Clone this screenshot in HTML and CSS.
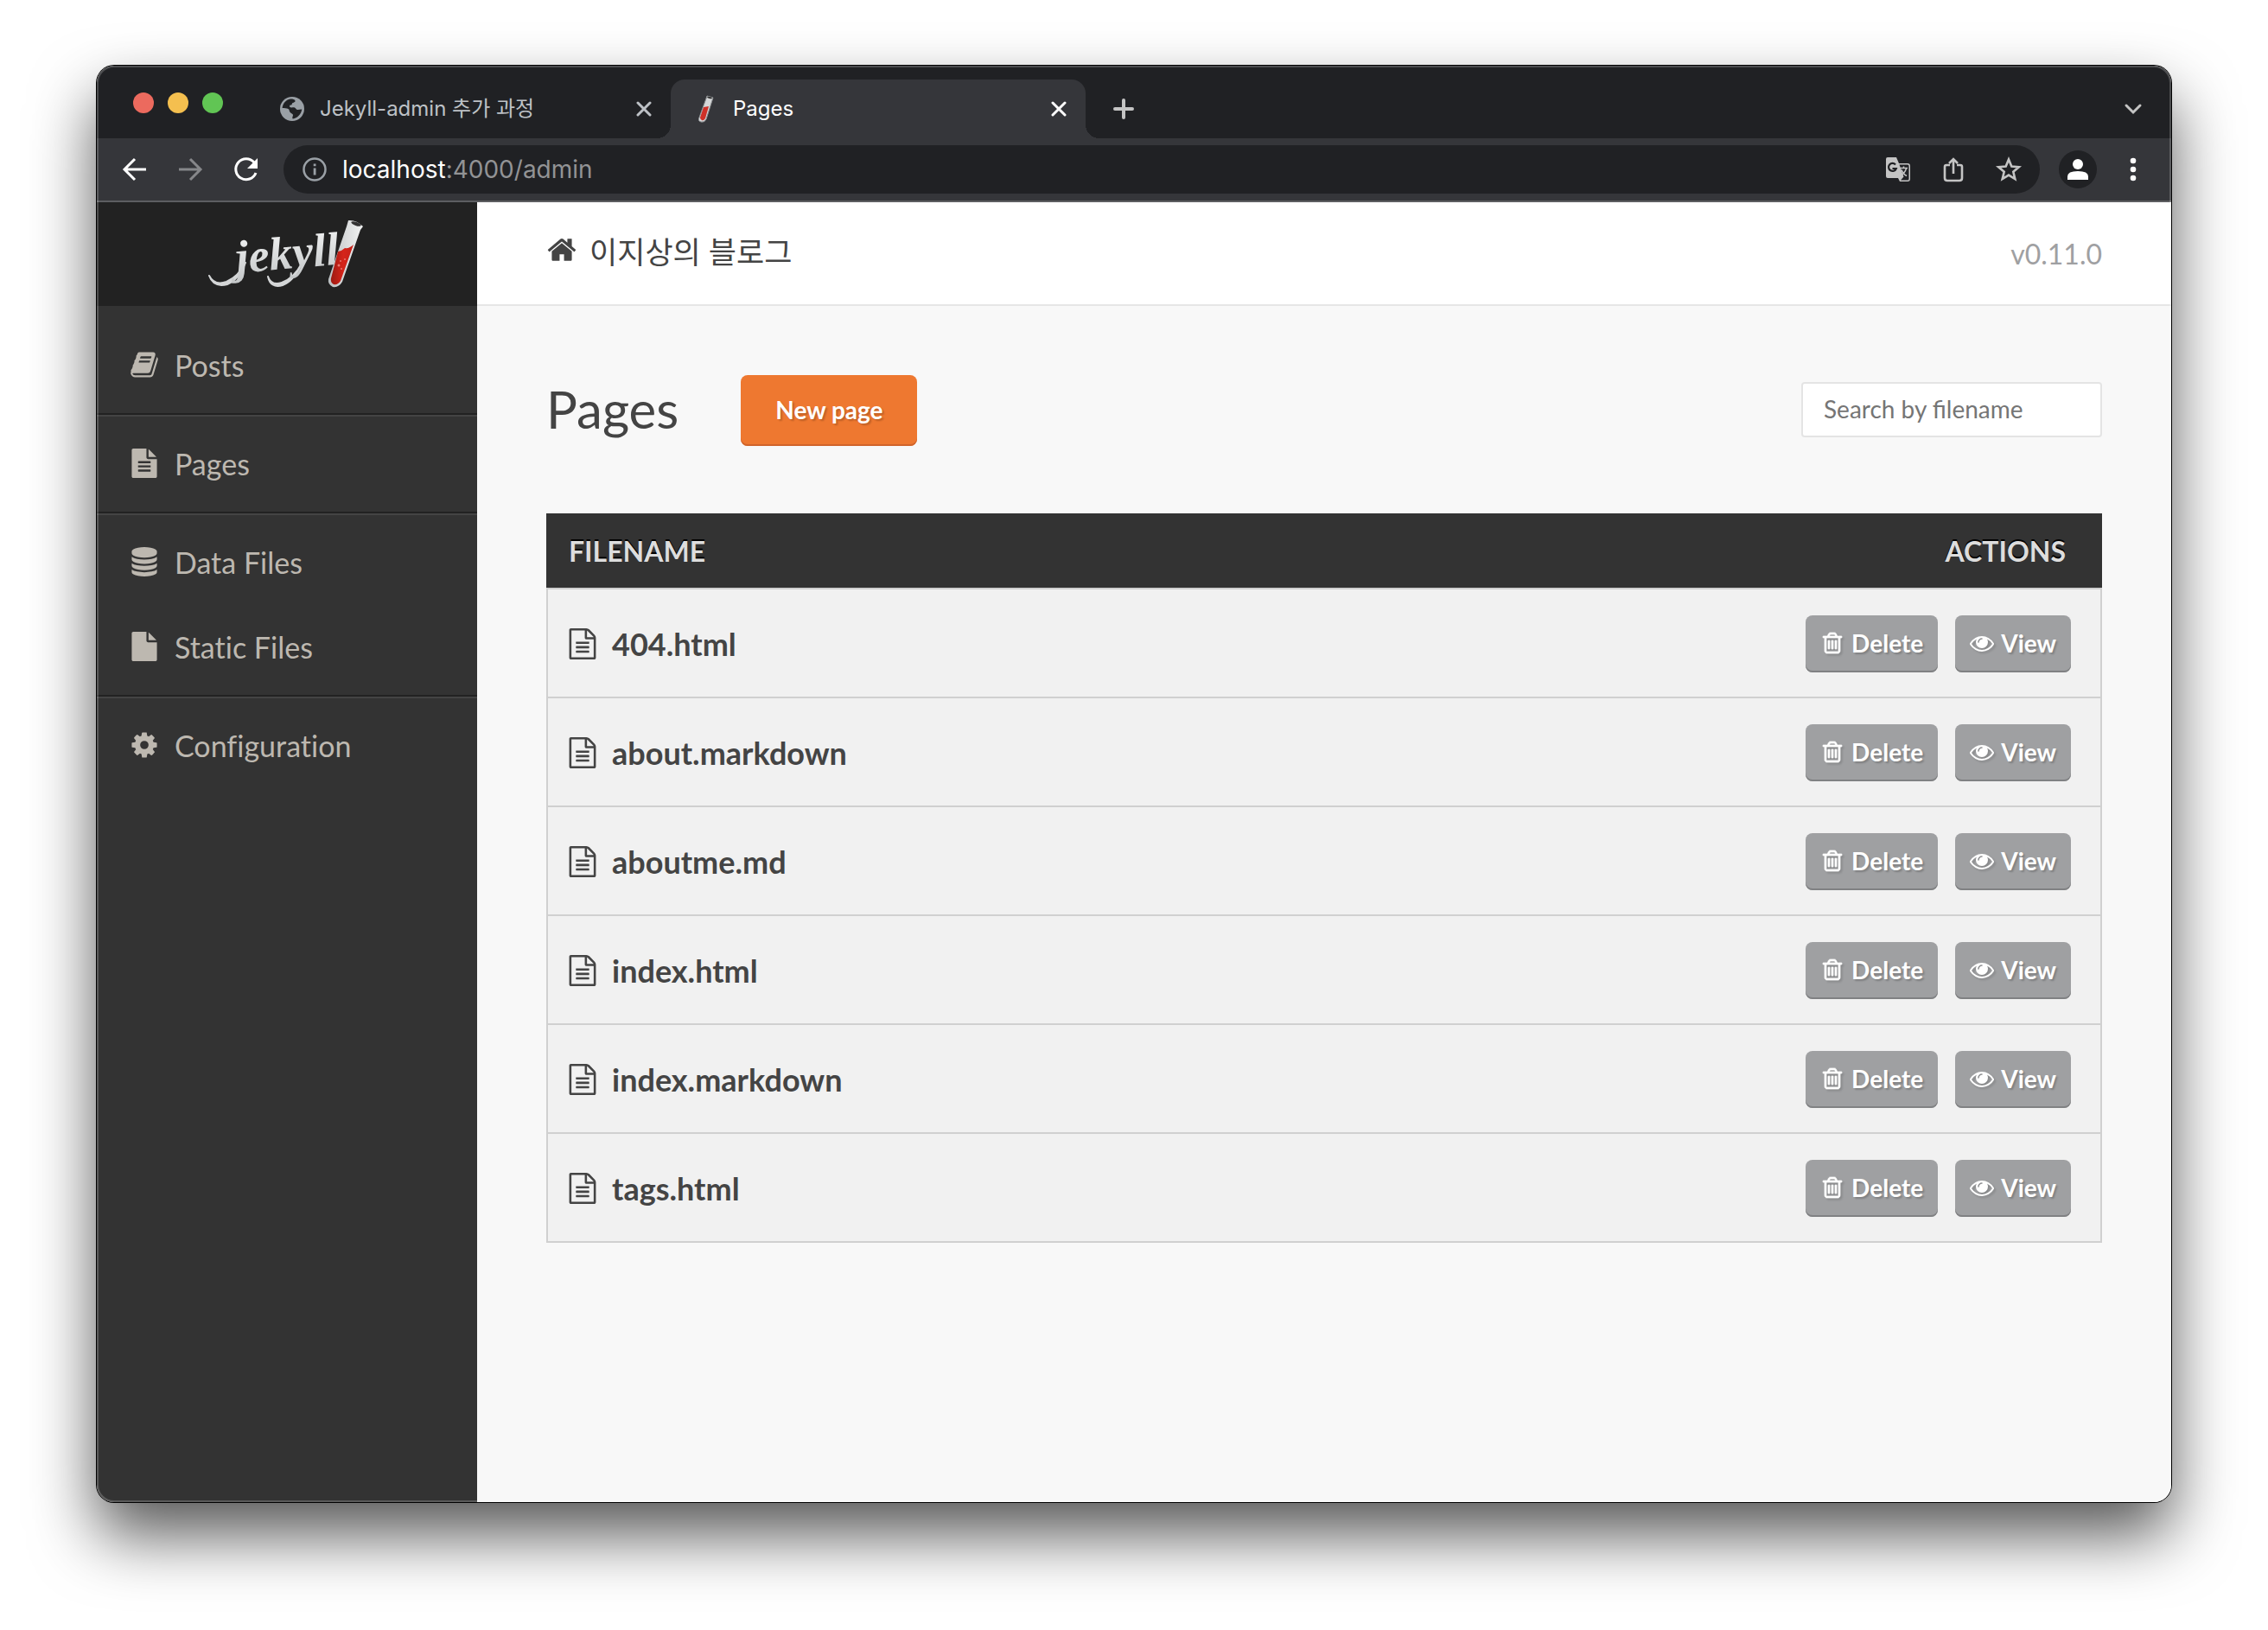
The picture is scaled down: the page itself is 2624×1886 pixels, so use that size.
FILE: index.html
```html
<!DOCTYPE html>
<html lang="ko">
<head>
<meta charset="utf-8">
<title>Pages</title>
<link rel="stylesheet" href="styles.css">
</head>
<body>
<svg class="sprite" aria-hidden="true">
  <defs>
    <linearGradient id="silver" x1="0" y1="0" x2="0" y2="1">
      <stop offset="0" stop-color="#f4f5f5"/><stop offset="1" stop-color="#c3c6c7"/>
    </linearGradient>
    <linearGradient id="glass" x1="0" y1="0" x2="1" y2="0">
      <stop offset="0" stop-color="#b9bdbf"/><stop offset=".5" stop-color="#d9dbdc"/><stop offset="1" stop-color="#f1f2f2"/>
    </linearGradient>
    <linearGradient id="potion" x1="0" y1="0" x2="1" y2="0">
      <stop offset="0" stop-color="#9c1a12"/><stop offset=".55" stop-color="#d6241a"/><stop offset="1" stop-color="#c22018"/>
    </linearGradient>
  </defs>
  <symbol id="i-book" viewBox="0 0 1792 1792"><path d="M1703 478q40 57 18 129l-275 906q-19 64-76.500 107.500t-122.500 43.500h-923q-77 0-148.500-53.500t-99.500-131.500q-24-67-2-127 0-4 3-27t4-37q1-8-3-21.500t-3-19.500q2-11 8-21t16.500-23.500 16.500-23.500q23-38 45-91.500t30-91.500q3-10 .5-30t-.5-28q3-11 17-28t17-23q21-36 42-92t25-90q1-9-2.500-32t.5-28q4-13 22-30.500t22-22.500q19-26 42.500-84.500t27.500-96.500q1-8-3-25.500t-2-26.500q2-8 9-18t18-23 17-21q8-12 16.500-30.500t15-35 16-36 19.500-32 26.500-23.500 36-11.500 47.500 5.500l-1 3q38-9 51-9h761q74 0 114 56t18 130l-274 906q-36 119-71.500 153.500t-128.500 34.500h-869q-27 0-38 15-11 16-1 43 24 70 144 70h923q29 0 56-15.500t35-41.500l300-987q7-22 5-57 38 15 59 43zm-1064 2q-4 13 2 22.500t20 9.500h608q13 0 25.500-9.500t16.500-22.500l21-64q4-13-2-22.500t-20-9.500h-608q-13 0-25.500 9.500t-16.500 22.500zm-83 256q-4 13 2 22.500t20 9.500h608q13 0 25.500-9.500t16.500-22.500l21-64q4-13-2-22.500t-20-9.500h-608q-13 0-25.500 9.500t-16.500 22.500z"/></symbol>
  <symbol id="i-file-text" viewBox="0 0 1792 1792"><path d="M1596 476q14 14 28 36h-472v-472q22 14 36 28zm-476 164h544v1056q0 40-28 68t-68 28h-1344q-40 0-68-28t-28-68v-1600q0-40 28-68t68-28h800v544q0 40 28 68t68 28zm160 736v-64q0-14-9-23t-23-9h-704q-14 0-23 9t-9 23v64q0 14 9 23t23 9h704q14 0 23-9t9-23zm0-256v-64q0-14-9-23t-23-9h-704q-14 0-23 9t-9 23v64q0 14 9 23t23 9h704q14 0 23-9t9-23zm0-256v-64q0-14-9-23t-23-9h-704q-14 0-23 9t-9 23v64q0 14 9 23t23 9h704q14 0 23-9t9-23z"/></symbol>
  <symbol id="i-database" viewBox="0 0 1792 1792"><path d="M896 768q237 0 443-43t325-127v170q0 69-103 128t-280 93.500-385 34.500-385-34.500-280-93.500-103-128v-170q119 84 325 127t443 43zm0 768q237 0 443-43t325-127v170q0 69-103 128t-280 93.500-385 34.500-385-34.500-280-93.500-103-128v-170q119 84 325 127t443 43zm0-384q237 0 443-43t325-127v170q0 69-103 128t-280 93.500-385 34.500-385-34.500-280-93.500-103-128v-170q119 84 325 127t443 43zm0-1152q208 0 385 34.500t280 93.500 103 128v128q0 69-103 128t-280 93.500-385 34.500-385-34.500-280-93.500-103-128v-128q0-69 103-128t280-93.500 385-34.500z"/></symbol>
  <symbol id="i-file" viewBox="0 0 1792 1792"><path d="M1152 512v-472q22 14 36 28l408 408q14 14 28 36h-472zm-128 32q0 40 28 68t68 28h544v1056q0 40-28 68t-68 28h-1344q-40 0-68-28t-28-68v-1600q0-40 28-68t68-28h800v544z"/></symbol>
  <symbol id="i-cog" viewBox="0 0 1792 1792"><path d="M1152 896q0-106-75-181t-181-75-181 75-75 181 75 181 181 75 181-75 75-181zm512-109v222q0 12-8 23t-20 13l-185 28q-19 54-39 91 35 50 107 138 10 12 10 25t-9 23q-27 37-99 108t-94 71q-12 0-26-9l-138-108q-44 23-91 38-16 136-29 186-7 28-36 28h-222q-14 0-24.500-8.500t-11.500-21.500l-28-184q-49-16-90-37l-141 107q-10 9-25 9-14 0-25-11-126-114-165-168-7-10-7-23 0-12 8-23 15-21 51-66.500t54-70.500q-27-50-41-99l-183-27q-13-2-21-12.500t-8-23.500v-222q0-12 8-23t19-13l186-28q14-46 39-92-40-57-107-138-10-12-10-24 0-10 9-23 26-36 98.500-107.500t94.500-71.500q13 0 26 10l138 107q44-23 91-38 16-136 29-186 7-28 36-28h222q14 0 24.500 8.500t11.500 21.500l28 184q49 16 90 37l142-107q9-9 24-9 13 0 25 10 129 119 165 170 7 8 7 22 0 12-8 23-15 21-51 66.500t-54 70.500q26 50 41 98l183 28q13 2 21 12.500t8 23.500z"/></symbol>
  <symbol id="i-home" viewBox="0 0 1792 1792"><path d="M1472 992v480q0 26-19 45t-45 19h-384v-384h-256v384h-384q-26 0-45-19t-19-45v-480q0-1 .5-3t.5-3l575-474 575 474q1 2 1 6zm223-69l-62 74q-8 9-21 11h-3q-13 0-21-7l-692-577-692 577q-12 8-24 7-13-2-21-11l-62-74q-8-10-7-23.500t11-21.500l719-599q32-26 76-26t76 26l244 204v-195q0-14 9-23t23-9h192q14 0 23 9t9 23v408l219 182q10 8 11 21.500t-7 23.500z"/></symbol>
  <symbol id="i-doc" viewBox="0 0 1792 1792"><path d="M1596 380q28 28 48 76t20 88v1152q0 40-28 68t-68 28h-1344q-40 0-68-28t-28-68v-1600q0-40 28-68t68-28h896q40 0 88 20t76 48zm-444-244v376h376q-10-29-22-41l-313-313q-12-12-41-22zm384 1528v-1024h-416q-40 0-68-28t-28-68v-416h-768v1536h1280zm-1024-864q0-14 9-23t23-9h704q14 0 23 9t9 23v64q0 14-9 23t-23 9h-704q-14 0-23-9t-9-23v-64zm736 224q14 0 23 9t9 23v64q0 14-9 23t-23 9h-704q-14 0-23-9t-9-23v-64q0-14 9-23t23-9h704zm0 256q14 0 23 9t9 23v64q0 14-9 23t-23 9h-704q-14 0-23-9t-9-23v-64q0-14 9-23t23-9h704z"/></symbol>
  <symbol id="i-trash" viewBox="0 0 1792 1792"><path stroke="currentColor" stroke-width="48" d="M704 736v576q0 14-9 23t-23 9h-64q-14 0-23-9t-9-23v-576q0-14 9-23t23-9h64q14 0 23 9t9 23zm256 0v576q0 14-9 23t-23 9h-64q-14 0-23-9t-9-23v-576q0-14 9-23t23-9h64q14 0 23 9t9 23zm256 0v576q0 14-9 23t-23 9h-64q-14 0-23-9t-9-23v-576q0-14 9-23t23-9h64q14 0 23 9t9 23zm128 724v-948h-896v948q0 22 7 40.500t14.500 27 10.500 8.500h832q3 0 10.500-8.500t14.500-27 7-40.500zm-672-1076h448l-48-117q-7-9-17-11h-317q-10 2-17 11zm928 32v64q0 14-9 23t-23 9h-96v948q0 83-47 143.500t-113 60.500h-832q-66 0-113-58.500t-47-141.500v-952h-96q-14 0-23-9t-9-23v-64q0-14 9-23t23-9h309l70-167q15-37 54-63t79-26h320q40 0 79 26t54 63l70 167h309q14 0 23 9t9 23z"/></symbol>
  <symbol id="i-eye" viewBox="0 0 1792 1792"><path d="M1664 960q-152-236-381-353 61 104 61 225 0 185-131.500 316.500t-316.500 131.500-316.500-131.500-131.500-316.500q0-121 61-225-229 117-381 353 133 205 333.500 326.500t434.500 121.500 434.500-121.500 333.500-326.500zm-720-384q0-20-14-34t-34-14q-125 0-214.500 89.500t-89.500 214.500q0 20 14 34t34 14 34-14 14-34q0-86 61-147t147-61q20 0 34-14t14-34zm848 384q0 34-20 69-140 230-376.500 368.500t-499.500 138.500-499.500-139-376.500-368q-20-35-20-69t20-69q140-229 376.500-368t499.500-139 499.500 139 376.500 368q20 35 20 69z"/></symbol>
  <symbol id="i-close" viewBox="0 0 18 18"><path d="M2 2l14 14M16 2L2 16" fill="none" stroke="currentColor" stroke-width="3" stroke-linecap="round"/></symbol>
  <symbol id="i-tube" viewBox="0 0 18 32">
    <path d="M10 1l7 2-8 25q-2 4-6 3T1 26L9 4z" fill="#d5d7d8" stroke="#8d9092"/>
    <path d="M6 14l6-1-4 14q-2 3-4 2t-2-3z" fill="#cf3128"/>
    <ellipse cx="13" cy="3" rx="3" ry="1" fill="#333" transform="rotate(16 13 3)"/>
  </symbol>
</svg>

<div class="window">
  <div class="tabstrip">
    <div class="lights"><span class="light red"></span><span class="light yellow"></span><span class="light green"></span></div>
    <div class="tabs">
      <div class="tab">
        <svg class="globe" viewBox="0 0 28 28"><circle cx="14" cy="14" r="14" fill="#9aa0a6"/><path d="M12 2.500c3 0 5 .4 5.500 2s-1.500 1.500-2 3-1 2.300-2.700 2.300-2.300 1-1.500 2 3.300.4 5 .5 2 2.400 3.700 2.600 3.300-.6 5.300-.4C24.500 20 20 25 14.800 25.400c-1.200-1.400 0-2.600.2-4.200s-2.400-2-3.500-3.400-.3-3-2-3.900S5 13.300 2.600 13C3 8 6.500 3.500 12 2.500z" fill="#202124"/><path d="M11 9.500q3 .8 2.800-1.200t3-1.500q2 1 3.800 0l2 3.700-3 1.500-3.500-1.500-3 1.500z" fill="#9aa0a6"/></svg>
        <span class="tab-title">Jekyll-admin 추가 과정</span>
        <button class="tab-close" aria-label="Close tab"><svg viewBox="0 0 18 18"><use href="#i-close"/></svg></button>
      </div>
      <div class="tab active">
        <svg class="tube" viewBox="0 0 18 32"><use href="#i-tube"/></svg>
        <span class="tab-title">Pages</span>
        <button class="tab-close" aria-label="Close tab"><svg viewBox="0 0 18 18"><use href="#i-close"/></svg></button>
      </div>
    </div>
    <button class="plain new-tab" aria-label="New tab"><svg viewBox="0 0 24 24"><path d="M12 2v20M2 12h20" fill="none" stroke="currentColor" stroke-width="4" stroke-linecap="round"/></svg></button>
    <button class="plain tab-search" aria-label="Search tabs"><svg viewBox="0 0 24 24"><path d="M4 8l8 8 8-8" fill="none" stroke="currentColor" stroke-width="3" stroke-linecap="round"/></svg></button>
  </div>

  <div class="toolbar">
    <div class="nav-btns">
      <button class="plain nav-btn" aria-label="Back"><svg viewBox="0 0 32 32"><path d="M29 16H5M16 4L4 16l12 12" fill="none" stroke="currentColor" stroke-width="3"/></svg></button>
      <button class="plain nav-btn dim" aria-label="Forward"><svg viewBox="0 0 32 32"><path d="M3 16h24M16 4l12 12-12 12" fill="none" stroke="currentColor" stroke-width="3"/></svg></button>
      <button class="plain nav-btn" aria-label="Reload"><svg viewBox="0 0 32 32"><path d="M28 20A12 12 0 1 1 26 8" fill="none" stroke="currentColor" stroke-width="3"/><path d="M30 3v12H18z" fill="currentColor"/></svg></button>
    </div>
    <div class="omnibox">
      <svg class="info" viewBox="0 0 28 28"><circle cx="14" cy="14" r="12.500" fill="none" stroke="currentColor" stroke-width="2.500"/><path d="M12.700 12.500h2.800v8h-2.800zM12.700 7.500h2.800v2.800h-2.800z" fill="currentColor"/></svg>
      <p class="url"><span>localhost</span>:4000/admin</p>
      <div class="omnibox-actions">
        <button class="plain" aria-label="Translate"><svg viewBox="0 0 32 32"><path d="M4 2h10l3 7h10a3 3 0 0 1 3 3v15a3 3 0 0 1-3 3H18l-2-4H4a2 2 0 0 1-2-2V4a2 2 0 0 1 2-2z" fill="#c4c4c4"/><path d="M17.500 10.500l5 14-3.500 4h8q1.500 0 1.500-1.500V12q0-1.500-1.500-1.500z" fill="#202124"/><path d="M18 14.500h9M22.500 12.500v2M25.500 15q-2 6-6.500 8M20 16.500q2 5 6 7" fill="none" stroke="#c4c4c4" stroke-width="1.500"/><path d="M13 10.500a4.500 4.500 0 1 0 .8 4.500H9.500" fill="none" stroke="#202124" stroke-width="2.200"/></svg></button>
        <button class="plain" aria-label="Share"><svg viewBox="0 0 32 32"><path d="M12 11H8q-2 0-2 2v13q0 3 3 3h14q3 0 3-3V13q0-2-2-2h-4M16 21V4M11 9l5-5 5 5" fill="none" stroke="currentColor" stroke-width="2.600"/></svg></button>
        <button class="plain" aria-label="Bookmark"><svg viewBox="0 0 32 32"><path d="M16 4.500l3.300 8 8.500.7-6.500 5.500 2 8.400-7.300-4.500-7.300 4.500 2-8.400-6.500-5.500 8.500-.7z" fill="none" stroke="currentColor" stroke-width="2.600"/></svg></button>
      </div>
    </div>
    <button class="plain avatar" aria-label="Profile"><svg viewBox="0 0 24 24"><circle cx="12" cy="6" r="6" fill="#fff"/><path d="M0 24v-4q0-6 12-6t12 6v4z" fill="#fff"/></svg></button>
    <button class="plain menu" aria-label="Menu"><svg viewBox="0 0 32 32"><circle cx="16" cy="6" r="3.300" fill="currentColor"/><circle cx="16" cy="16" r="3.300" fill="currentColor"/><circle cx="16" cy="26" r="3.300" fill="currentColor"/></svg></button>
  </div>

  <div class="app">
    <aside class="sidebar">
      <a class="logo" href="#" aria-label="Jekyll">
        <svg viewBox="0 0 180 80">
          <path d="M0 65Q6 77 20 72 34 66 42 50 34 70 21 75 5 79 0 65zM68 66q4 11 16 7 14-5 23-22-9 20-22 25-14 4-17-10z" fill="#d4d6d7" stroke="#d4d6d7" stroke-width="2" stroke-linejoin="round"/>
          <text class="wordmark" x="32" y="62" transform="rotate(-5 32 62)" fill="url(#silver)">jekyll</text>
          <path d="M161 1q9-1 17 7l-3 4-21 60q-4 7-11 6-6-3-5-9l21-61z" fill="url(#glass)"/>
          <path d="M149 37q5-1 8-4 5 1 10-4l-15 42q-3 5-8 4-4-2-3-7z" fill="url(#potion)"/>
          <ellipse cx="170" cy="5" rx="6" ry="2" fill="#333" transform="rotate(20 170 5)"/>
          <g fill="#e8776f"><circle cx="152" cy="48" r="1"/><circle cx="157" cy="46" r="1"/><circle cx="150" cy="53" r="1.500"/><circle cx="153" cy="57" r="1"/></g>
        </svg>
      </a>
      <nav class="nav">
        <ul><li><a href="#"><svg viewBox="0 0 34 34"><use href="#i-book"/></svg>Posts</a></li></ul>
        <ul><li><a href="#"><svg viewBox="0 0 34 34"><use href="#i-file-text"/></svg>Pages</a></li></ul>
        <ul>
          <li><a href="#"><svg viewBox="0 0 34 34"><use href="#i-database"/></svg>Data Files</a></li>
          <li><a href="#"><svg viewBox="0 0 34 34"><use href="#i-file"/></svg>Static Files</a></li>
        </ul>
        <ul><li><a href="#"><svg viewBox="0 0 34 34"><use href="#i-cog"/></svg>Configuration</a></li></ul>
      </nav>
    </aside>

    <main class="main">
      <header class="site-header">
        <a class="site-title" href="#"><svg viewBox="0 0 36 36"><use href="#i-home"/></svg>이지상의 블로그</a>
        <span class="version">v0.11.0</span>
      </header>
      <section class="content">
        <div class="page-head">
          <h1>Pages</h1>
          <a class="btn btn-create" href="#">New page</a>
          <input class="search" type="text" placeholder="Search by filename" aria-label="Search by filename">
        </div>
        <table class="files">
          <thead><tr><th>Filename</th><th class="actions-head">Actions</th></tr></thead>
          <tbody>
            <tr><td><a class="file" href="#"><svg viewBox="0 0 36 36"><use href="#i-doc"/></svg>404.html</a></td><td><div class="actions"><button class="btn btn-small"><svg viewBox="0 0 28 28"><use href="#i-trash"/></svg>Delete</button><a class="btn btn-small" href="#"><svg viewBox="0 0 28 28"><use href="#i-eye"/></svg>View</a></div></td></tr>
            <tr><td><a class="file" href="#"><svg viewBox="0 0 36 36"><use href="#i-doc"/></svg>about.markdown</a></td><td><div class="actions"><button class="btn btn-small"><svg viewBox="0 0 28 28"><use href="#i-trash"/></svg>Delete</button><a class="btn btn-small" href="#"><svg viewBox="0 0 28 28"><use href="#i-eye"/></svg>View</a></div></td></tr>
            <tr><td><a class="file" href="#"><svg viewBox="0 0 36 36"><use href="#i-doc"/></svg>aboutme.md</a></td><td><div class="actions"><button class="btn btn-small"><svg viewBox="0 0 28 28"><use href="#i-trash"/></svg>Delete</button><a class="btn btn-small" href="#"><svg viewBox="0 0 28 28"><use href="#i-eye"/></svg>View</a></div></td></tr>
            <tr><td><a class="file" href="#"><svg viewBox="0 0 36 36"><use href="#i-doc"/></svg>index.html</a></td><td><div class="actions"><button class="btn btn-small"><svg viewBox="0 0 28 28"><use href="#i-trash"/></svg>Delete</button><a class="btn btn-small" href="#"><svg viewBox="0 0 28 28"><use href="#i-eye"/></svg>View</a></div></td></tr>
            <tr><td><a class="file" href="#"><svg viewBox="0 0 36 36"><use href="#i-doc"/></svg>index.markdown</a></td><td><div class="actions"><button class="btn btn-small"><svg viewBox="0 0 28 28"><use href="#i-trash"/></svg>Delete</button><a class="btn btn-small" href="#"><svg viewBox="0 0 28 28"><use href="#i-eye"/></svg>View</a></div></td></tr>
            <tr><td><a class="file" href="#"><svg viewBox="0 0 36 36"><use href="#i-doc"/></svg>tags.html</a></td><td><div class="actions"><button class="btn btn-small"><svg viewBox="0 0 28 28"><use href="#i-trash"/></svg>Delete</button><a class="btn btn-small" href="#"><svg viewBox="0 0 28 28"><use href="#i-eye"/></svg>View</a></div></td></tr>
          </tbody>
        </table>
      </section>
    </main>
  </div>
</div>
</body>
</html>
```
FILE: styles.css
```css
*, *::before, *::after { box-sizing: border-box; }

body {
  margin: 0;
  min-height: 100vh;
  padding: 76px 112px 148px;
  display: flex;
  flex-direction: column;
  background: #fff;
  color: #444;
  font-family: Lato, "Noto Sans CJK KR", sans-serif;
  font-variant-ligatures: no-common-ligatures;
}

a { color: inherit; text-decoration: none; }
ul { margin: 0; padding: 0; list-style: none; }
svg { display: block; flex: none; fill: currentColor; }
button { font-family: inherit; cursor: pointer; }
.sprite { position: absolute; width: 0; height: 0; }

.plain {
  display: grid;
  place-items: center;
  flex: none;
  padding: 0;
  border: 0;
  background: none;
  color: #c4c4c4;
}

/* Browser window */
.window {
  position: relative;
  flex: 1;
  display: flex;
  flex-direction: column;
  border-radius: 20px;
  box-shadow: 0 0 0 1px #000, 0 38px 74px rgba(0, 0, 0, .66);
}
.window::after {
  content: "";
  position: absolute;
  inset: 0;
  border-radius: 20px;
  box-shadow: inset 0 0 0 2px rgba(255, 255, 255, .2);
  pointer-events: none;
}

.tabstrip {
  display: flex;
  align-items: flex-end;
  height: 84px;
  padding: 0 32px 0 42px;
  border-radius: 20px 20px 0 0;
  background: #202124;
  font-family: Inter, "Noto Sans CJK KR", sans-serif;
  font-size: 24px;
  line-height: 32px;
}
.lights {
  display: flex;
  align-items: center;
  gap: 16px;
  width: 142px;
  height: 82px;
}
.light { width: 24px; height: 24px; border-radius: 50%; }
.red { background: #ec6a5e; }
.yellow { background: #f4bf4f; }
.green { background: #61c554; }

.tabs { display: flex; }
.tab {
  position: relative;
  display: flex;
  align-items: center;
  width: 480px;
  height: 68px;
  padding: 0 22px 0 28px;
  color: #bdc1c6;
}
.tab.active {
  border-radius: 16px 16px 0 0;
  background: #35363a;
  color: #fff;
}
.tab.active::before,
.tab.active::after {
  content: "";
  position: absolute;
  bottom: 0;
  width: 16px;
  height: 16px;
}
.tab.active::before { right: 100%; background: radial-gradient(circle at 0 0, #202124 16px, #35363a 16px); }
.tab.active::after { left: 100%; background: radial-gradient(circle at 100% 0, #202124 16px, #35363a 16px); }
.globe { width: 28px; height: 28px; }
.tube { width: 18px; height: 32px; margin: 0 6px 0 4px; }
.tab-title { flex: 1; padding: 0 16px 0 18px; }
.active .tab-title { padding-left: 16px; }
.tab-close {
  width: 18px;
  height: 18px;
  padding: 0;
  border: 0;
  background: none;
  color: inherit;
}
.tab-close svg { width: 18px; height: 18px; }
.new-tab { height: 68px; margin-left: 32px; }
.new-tab svg, .tab-search svg { width: 24px; height: 24px; }
.tab-search { height: 68px; margin-left: auto; }

.toolbar {
  display: flex;
  align-items: center;
  height: 74px;
  padding: 0 28px;
  border-bottom: 2px solid #5d5e61;
  background: #35363a;
  color: #fff;
}
.toolbar svg { width: 32px; height: 32px; }
.nav-btns { display: flex; gap: 32px; }
.nav-btn { width: 32px; color: #fff; }
.nav-btn.dim { color: #86878a; }
.omnibox {
  display: flex;
  align-items: center;
  gap: 18px;
  flex: 1;
  height: 56px;
  margin: 0 22px 0 28px;
  padding: 0 20px 0 22px;
  border-radius: 28px;
  background: #202124;
}
.omnibox-actions { display: flex; gap: 32px; }
.toolbar .info { width: 28px; height: 28px; color: #9aa0a6; }
.url {
  flex: 1;
  margin: 0;
  color: #929395;
  font-family: Inter, sans-serif;
  font-size: 28px;
  line-height: 36px;
}
.url span { color: #fff; }
.avatar { width: 44px; height: 44px; border-radius: 50%; background: #202124; }
.toolbar .avatar svg { width: 24px; height: 24px; }
.menu { width: 32px; margin-left: 26px; color: #fff; }

/* Admin application */
.app { flex: 1; display: flex; }

.sidebar {
  flex: none;
  width: 440px;
  border-radius: 0 0 0 20px;
  background: #333;
  color: #bdb8b0;
}
.logo {
  display: grid;
  place-items: center;
  height: 120px;
  background: #222;
}
.logo svg { width: 180px; height: 80px; overflow: visible; }
.wordmark { font: italic 700 54px "Liberation Serif", serif; }

.nav { padding-top: 14px; font-size: 34px; }
.nav ul { padding: 6px 0; }
.nav ul + ul { border-top: 2px solid #444; }
.nav ul:not(:last-child) { border-bottom: 2px solid #222; }
.nav a {
  display: flex;
  align-items: center;
  gap: 18px;
  height: 98px;
  padding: 0 38px 2px;
}
.nav svg { width: 34px; height: 34px; }

.main {
  flex: 1;
  border-radius: 0 0 20px 0;
  background: #f8f8f8;
}
.site-header {
  display: flex;
  align-items: center;
  justify-content: space-between;
  height: 120px;
  padding: 0 80px;
  border-bottom: 2px solid #e6e6e6;
  background: #fff;
}
.site-title {
  display: flex;
  align-items: center;
  gap: 14px;
  padding-bottom: 8px;
  font-size: 35px;
}
.site-title svg { width: 36px; height: 36px; }
.version { color: #9fa0a2; font-size: 32px; }

.content { padding: 80px; }
.page-head {
  display: flex;
  align-items: center;
  gap: 72px;
  margin-bottom: 78px;
}
h1 { margin: 0; padding-bottom: 4px; font-size: 60px; font-weight: 400; line-height: 76px; }

.btn {
  display: inline-flex;
  align-items: center;
  justify-content: center;
  gap: 8px;
  border: 0;
  border-radius: 8px;
  color: #fff;
  font-size: 28px;
  font-weight: 700;
  line-height: 34px;
  text-shadow: 2px 2px 2px rgba(0, 0, 0, .2);
}
.btn-create {
  padding: 23px 40px 25px;
  background: #ee7830;
  box-shadow: inset 0 -2px #d0642b;
}
.btn-small {
  height: 66px;
  padding: 0 17px 2px;
  background: #9fa0a2;
  box-shadow: inset 0 -2px #808183;
}
.btn svg { width: 28px; height: 28px; filter: drop-shadow(2px 2px 1px rgba(0, 0, 0, .15)); }

.search {
  width: 348px;
  height: 64px;
  margin: 0 0 2px auto;
  padding: 0 24px 2px;
  border: 2px solid #e4e4e4;
  border-radius: 4px;
  background: #fff;
  font: 28px Lato, sans-serif;
}
.search::placeholder { color: #757575; }

.files { width: 100%; border-spacing: 0; }
.files th {
  height: 88px;
  padding: 0 26px;
  border-bottom: 2px solid #d0d0d0;
  background: #333;
  background-clip: padding-box;
  color: #ddd;
  font-size: 32px;
  text-align: left;
  text-shadow: 0 -2px #000;
  text-transform: uppercase;
}
.files .actions-head { padding-right: 42px; text-align: right; }
.files td {
  height: 126px;
  padding: 2px 22px 0;
  border-bottom: 2px solid #d0d0d0;
  background: #f1f1f1;
}
.files td:first-child { border-left: 2px solid #d0d0d0; }
.files td:last-child { padding-right: 34px; border-right: 2px solid #d0d0d0; }
.file {
  display: flex;
  align-items: center;
  gap: 16px;
  font-size: 36px;
  font-weight: 700;
}
.file svg { width: 36px; height: 36px; }
.actions { display: flex; justify-content: flex-end; gap: 20px; }
```
